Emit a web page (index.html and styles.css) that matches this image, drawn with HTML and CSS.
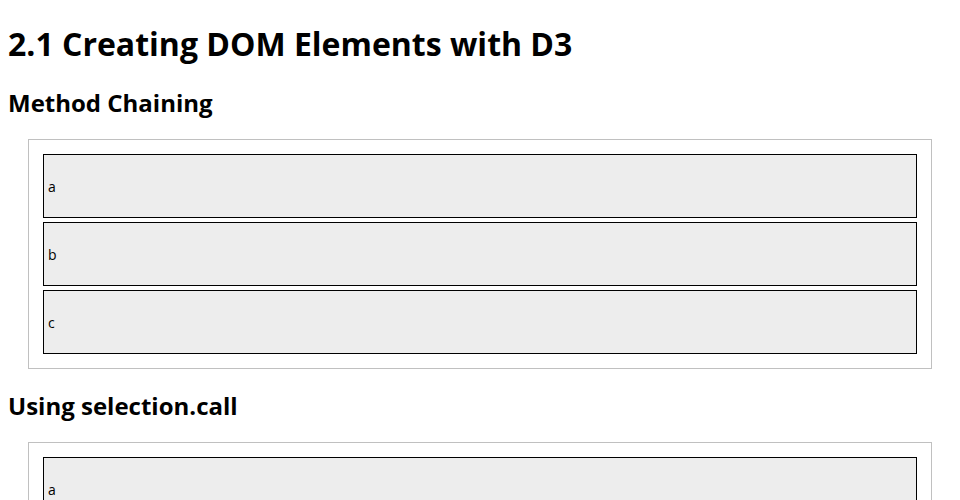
FILE: index.html
```html
<!DOCTYPE html>
<html>
<head>
<meta charset="utf-8">
<link rel="stylesheet" href="styles.css">
</head>
<body>
<h1>2.1 Creating DOM Elements with D3</h1>
<h2>Method Chaining</h2>
<div class="demo">
  <div class="item">a</div>
  <div class="item">b</div>
  <div class="item">c</div>
</div>
<h2>Using selection.call</h2>
<div class="demo">
  <div class="item">a</div>
  <div class="item">b</div>
  <div class="item">c</div>
</div>
</body>
</html>
```
FILE: styles.css
```css
body {
  margin: 0 8px 8px;
  font-family: "Open Sans", sans-serif;
  color: #000;
  background: #fff;
}
h1 {
  font-size: 32px;
  font-weight: 700;
  margin: 22px 0 21px;
}
h2 {
  font-size: 24px;
  font-weight: 700;
  margin: 20px 0;
}
.demo {
  margin: 0 20px;
  border: 1px solid #c0c0c0;
  padding: 14px;
  display: flex;
  flex-direction: column;
  gap: 4px;
}
.item {
  height: 62px;
  border: 1px solid #000;
  background: #ededed;
  font-size: 14px;
  padding: 0 4px;
  display: flex;
  align-items: center;
}
```
